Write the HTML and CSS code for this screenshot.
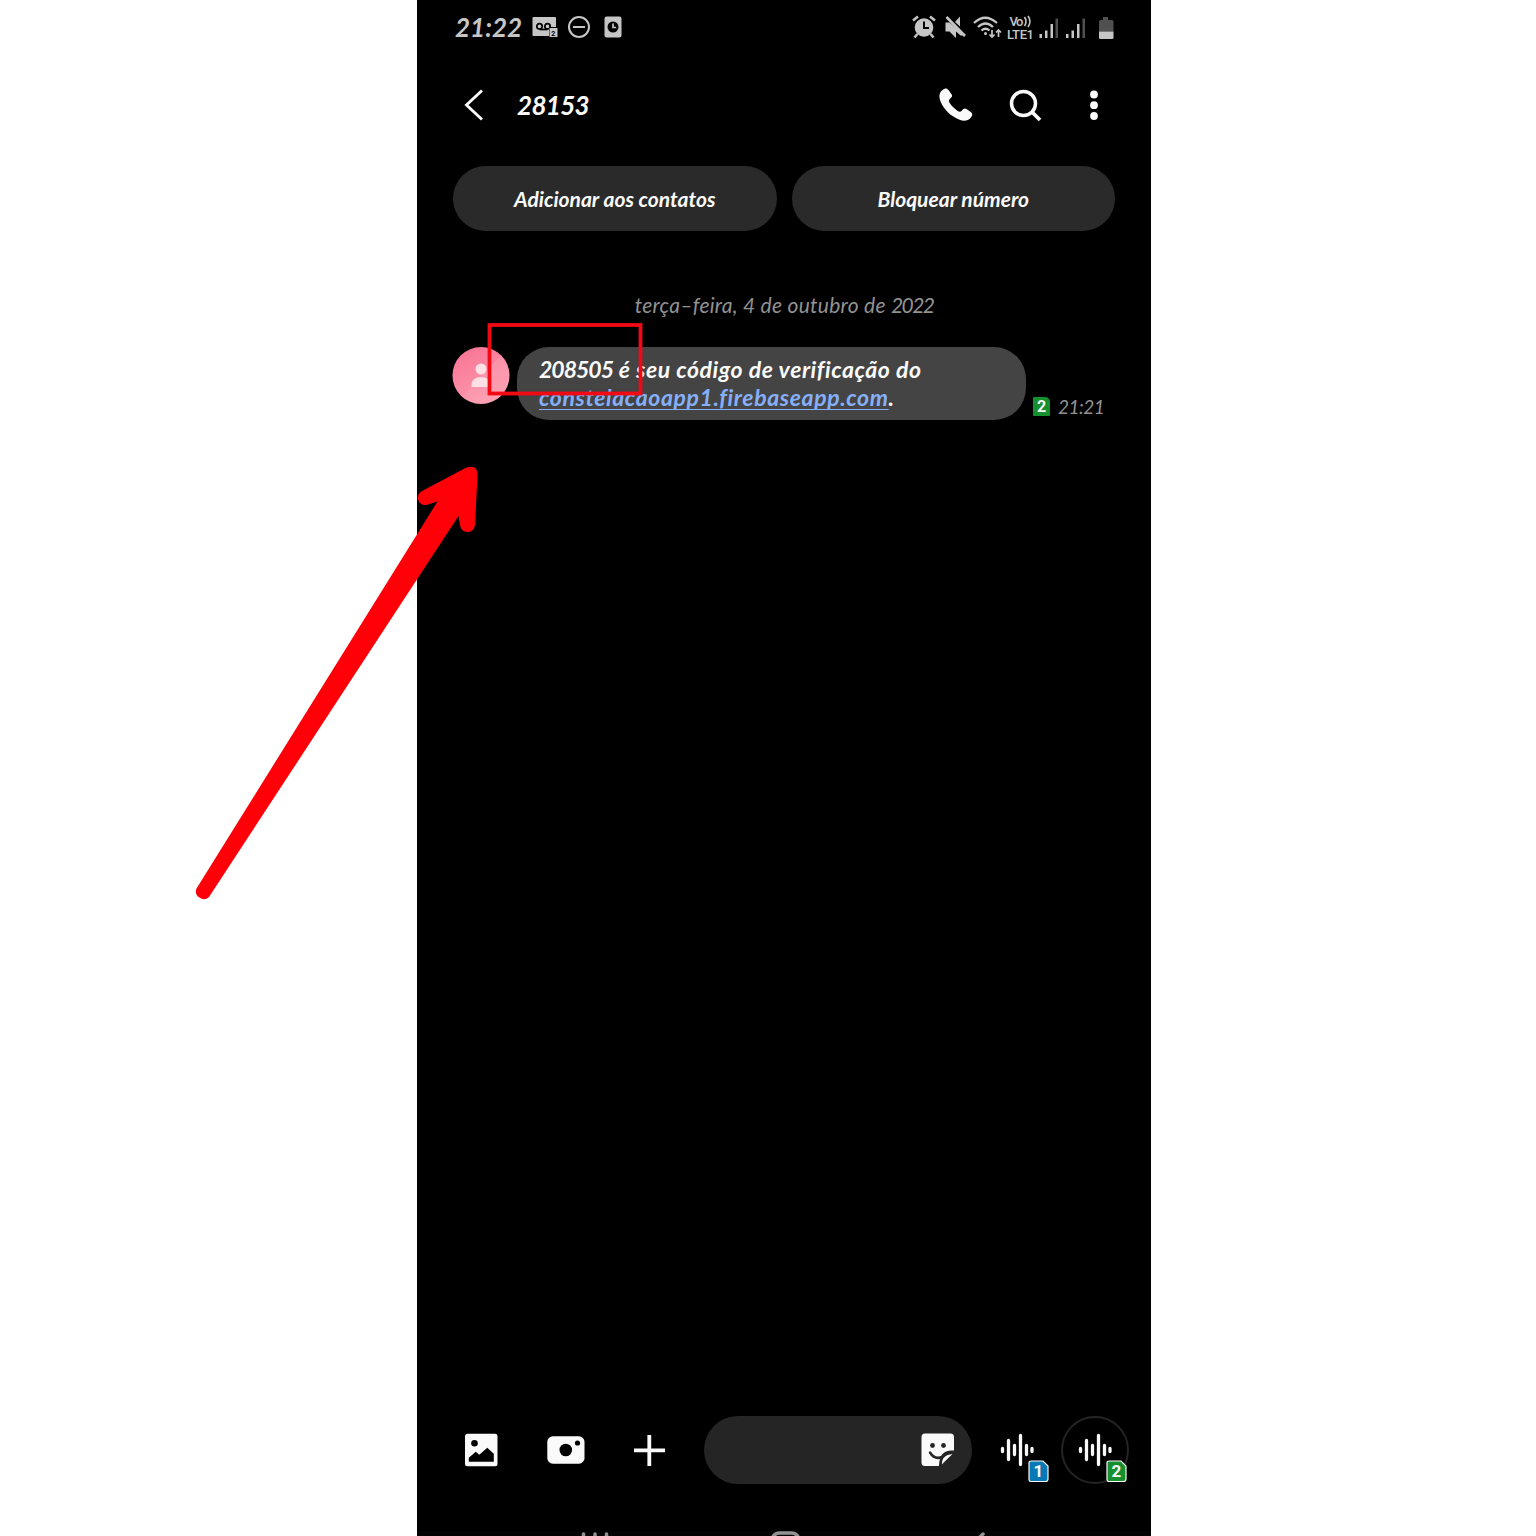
FILE: index.html
```html
<!DOCTYPE html>
<html lang="pt-BR">
<head>
<meta charset="utf-8">
<title>28153</title>
<link rel="stylesheet" href="styles.css">
</head>
<body>
<main class="phone">
  <div class="status">
    <span class="clock">21:22</span>
    <svg class="status-left" width="92" height="24" viewBox="0 0 92 24" fill="#c6c6c6">
      <path d="M1.500 2h21.500q1 0 1 1v9h-7v9h-15.500q-1 0-1-1v-17q0-1 1-1z"/>
      <g fill="none" stroke="#000" stroke-width="1.700"><circle cx="7.500" cy="11.300" r="2.700"/><circle cx="15.500" cy="11.300" r="2.700"/><path d="M7.500 14.500h8"/></g>
      <rect x="17.500" y="13" width="8" height="9"/><text class="tiny" x="19.300" y="20.500">2</text>
      <circle cx="47" cy="12" r="10" fill="none" stroke="#c6c6c6" stroke-width="2"/><path d="M41 11h12v2h-12z"/>
      <rect x="72.500" y="1.500" width="17" height="21" rx="2"/><circle cx="81" cy="12" r="5.500" fill="#000"/><path d="M81 8.500v4h3.200" fill="none" stroke="#c6c6c6" stroke-width="1.700"/>
    </svg>
    <svg class="status-right" width="204" height="26" viewBox="0 0 204 26" fill="#c6c6c6">
      <circle cx="12" cy="13.500" r="9.300"/>
      <path d="M1 6.500l5-4M18 2.500l5 4M5.500 20l-3 3.500M18.500 20l3 3.500" stroke="#c6c6c6" stroke-width="2.500"/>
      <path d="M12 7.500v6.500h5" fill="none" stroke="#000" stroke-width="2"/>
      <path d="M33.500 8.500h4l15 13h-4l-4.500-4v6.500l-6.500-6.500h-4zM43 8l5-5.500v10z"/><path d="M34.500 3l18.500 19" stroke="#c6c6c6" stroke-width="2.600"/>
      <g fill="none" stroke="#c6c6c6" stroke-width="2.300"><path d="M62 9q11-10.500 23 0M66 13q7.500-7 15 0M69.500 16.500q4-3.500 8 0"/><path d="M80 16v7M77.500 20.500l2.500 2.500 2.500-2.500M86.500 23v-7M84 18.500l2.500-2.500 2.500 2.500" stroke-width="1.700"/></g><circle cx="73.500" cy="19.500" r="1.500"/>
      <text class="net" x="97.500" y="12" textLength="14">Vo</text><path d="M112.500 3q3 4.500 0 9M116 2q4 5.500 0 11" fill="none" stroke="#c6c6c6" stroke-width="1.700"/>
      <text class="net" x="95" y="24.500" textLength="27">LTE1</text>
      <path d="M127.500 20h2.500v4h-2.500zM133 16.500h2.500v7.500h-2.500zM138.500 10h2.500v14h-2.500zM154 20h2.500v4h-2.500zM159.500 16.500h2.500v7.500h-2.500zM165 10h2.500v14h-2.500z"/>
      <path d="M143.500 4.500h2.500v19.500h-2.500zM170.500 4.500h2.500v19.500h-2.500zM191 3h5v3h4q1.500 0 1.500 1.500v10h-14.500v-10q0-1.500 1.500-1.500h2.500z" fill="#505050"/>
      <path d="M187 17.500h14.500v6q0 1.500-1.500 1.500h-11.500q-1.500 0-1.500-1.500z"/>
    </svg>
  </div>

  <header class="header">
    <svg width="22" height="34" viewBox="0 0 22 34" fill="none" stroke="#fafafa" stroke-width="2.900"><path d="M19 2.500l-15.500 14.500 15.500 14.500"/></svg>
    <h1 class="title">28153</h1>
    <svg width="34" height="34" viewBox="0 0 34 34" fill="#fafafa"><path d="M3.200 2.200C6-.2 8-.1 9.500 2l3 4.200c1.200 1.700.6 2.900-1.700 4.700-1.300 1.200-1.200 2.500.1 4.300 2.100 3 4.500 5.400 7.500 7.500 1.900 1.300 3 1.400 4.300.1 1.900-2.300 3.100-2.900 4.800-1.700l4.200 3c2.100 1.500 2.100 3.400-.2 6-2.700 3-7 3.500-11.500 1.400C11.500 28 5 21.500 1.500 13.500-.2 9-.1 5 3.200 2.200z"/></svg>
    <svg class="search" width="34" height="34" viewBox="0 0 34 34" fill="none" stroke="#fafafa" stroke-width="3.500"><circle cx="14.500" cy="15.500" r="12"/><path d="M23 24l8 8" stroke-width="3.700"/></svg>
    <svg class="more" width="8" height="34" viewBox="0 0 8 34" fill="#fafafa"><circle cx="4" cy="6.500" r="3.900"/><circle cx="4" cy="17.200" r="3.900"/><circle cx="4" cy="28" r="3.900"/></svg>
  </header>

  <div class="actions">
    <button class="action">Adicionar aos contatos</button>
    <button class="action">Bloquear número</button>
  </div>

  <section class="thread">
    <p class="date">terça–feira, 4 de outubro de <span class="year">2022</span></p>
    <div class="message">
      <svg class="avatar" width="58" height="58" viewBox="0 0 58 58">
        <defs><linearGradient id="rose" x2="0.500" y2="1"><stop stop-color="#f87194"/><stop offset="1" stop-color="#fd9aad"/></linearGradient></defs>
        <circle cx="29" cy="28.500" r="28.500" fill="url(#rose)"/>
        <path d="M29 29L49 8.500A28.500 28.500 0 0 1 57.500 29z" fill="#fff" opacity=".1"/><path d="M29 29h28.500A28.500 28.500 0 0 1 10 50z" fill="#fff" opacity=".07"/>
        <circle cx="29" cy="22" r="5.500" fill="#fde0e6"/><path d="M19.500 40v-2c0-5 4-8 9.500-8s9.500 3 9.500 8v2z" fill="#fde0e6"/>
      </svg>
      <div class="bubble">
        <div class="line"><span class="code">208505</span> é seu código de verificação do</div>
        <div class="line"><a class="link">constelacaoapp1.firebaseapp.com</a>.</div>
      </div>
      <div class="meta"><span class="sim">2</span><span class="time">21:21</span></div>
    </div>
  </section>

  <footer class="composer">
    <svg class="gallery" width="34" height="34" viewBox="0 0 34 34"><rect x="1" y=".7" width="32.500" height="32.500" rx="2.500" fill="#fafafa"/><circle cx="10.500" cy="10.300" r="3.300"/><path d="M4.800 28.700v-4l7-6 3.500 3 8-7 6.500 6v8z"/></svg>
    <svg class="camera" width="38" height="28" viewBox="0 0 38 28"><rect x=".3" y=".3" width="37.200" height="27.400" rx="5.500" fill="#fafafa"/><circle cx="18.800" cy="14" r="6.300"/><circle cx="30.500" cy="7" r="2.600"/></svg>
    <svg class="plus" width="32" height="32" viewBox="0 0 32 32" stroke="#fafafa" stroke-width="3.800"><path d="M0 16.300h31M15.300 1v31"/></svg>
    <div class="field">
      <svg width="34" height="34" viewBox="0 0 34 34"><path d="M4 .5h25.500q3.500 0 3.500 3.500v13.500q-15-1.500-15 15.500H4Q.5 33 .5 29.500V4Q.5.500 4 .5z" fill="#fafafa"/><circle cx="11.500" cy="12.500" r="2.400" fill="#252525"/><circle cx="22.500" cy="12.500" r="2.400" fill="#252525"/><path d="M9 19.500q4.500 7.500 12 4.500" fill="none" stroke="#252525" stroke-width="2.500" stroke-linecap="round"/><path d="M31.500 21Q22 30 21 31.500q-.5-9.500 10.500-10.500z" fill="#fafafa"/></svg>
    </div>
    <div class="voice">
      <svg width="34" height="34" viewBox="0 0 34 34" stroke="#fafafa" stroke-width="3.300" stroke-linecap="round"><path d="M2.500 15.500v3M8.500 7.500v19M14.500 12.500v9M20.500 2.500v29M26.500 12.500v9M32 15.500v3"/></svg>
      <svg class="badge" width="21" height="23" viewBox="0 0 21 23"><path d="M3 1h12l5 5v13q0 2.500-2.500 2.500H3Q1 21.500 1 19V3q0-2 2-2z" fill="#0879b5" stroke="#fafafa" stroke-width="1.200"/><text class="badge-text" x="10.500" y="17.200">1</text></svg>
    </div>
    <div class="voice ringed">
      <svg width="34" height="34" viewBox="0 0 34 34" stroke="#fafafa" stroke-width="3.300" stroke-linecap="round"><path d="M2.500 15.500v3M8.500 7.500v19M14.500 12.500v9M20.500 2.500v29M26.500 12.500v9M32 15.500v3"/></svg>
      <svg class="badge" width="21" height="23" viewBox="0 0 21 23"><path d="M3 1h12l5 5v13q0 2.500-2.500 2.500H3Q1 21.500 1 19V3q0-2 2-2z" fill="#16902e" stroke="#fafafa" stroke-width="1.200"/><text class="badge-text" x="10.500" y="17.200">2</text></svg>
    </div>
  </footer>
  <svg class="navbar" width="734" height="5" viewBox="0 0 734 5" fill="none" stroke="#929292" stroke-width="3.500" stroke-linecap="round"><path d="M166.500 3v8M178 3v8M189.500 3v8M355 9q1-7 8-7h11q7 0 8 7M566 3l-8 8"/></svg>
</main>

<svg class="markup" width="1536" height="1536" viewBox="0 0 1536 1536">
  <rect x="489.500" y="325" width="151" height="68.500" fill="none" stroke="#f10914" stroke-width="3.800"/>
  <path d="M465.500 468Q477.500 463.500 477.500 475L475 525Q474 532 467.500 532Q461 532 460 525L458.500 516L209 897A7.800 7.800 0 0 1 196.500 888.500L437.500 501.500L427 504.800Q420 506 418 499.500Q417 493 423 490.500Z" fill="#ff0009"/>
</svg>
</body>
</html>
```
FILE: styles.css
```css
* { box-sizing: border-box; }
body { margin: 0; background: #fff; }
svg { display: block; flex: none; }

.phone {
  width: 734px;
  height: 1536px;
  margin-left: 417px;
  background: #000;
  color: #fafafa;
  font-family: Lato, "Open Sans", sans-serif;
  font-style: italic;
  display: flex;
  flex-direction: column;
  overflow: hidden;
  white-space: nowrap;
}

.status { height: 54px; padding: 0 35px 0 38px; display: flex; align-items: center; color: #c6c6c6; }
.clock { width: 77px; font-size: 26px; font-weight: 700; }
.status-right { margin-left: auto; }
.tiny { font: 700 7px Roboto, sans-serif; fill: #000; }
.net { font: 500 13px Roboto, sans-serif; }

.header { height: 102px; padding: 0 53px 0 46px; display: flex; align-items: center; }
.title { margin: 0 auto 0 32px; font-size: 26px; font-weight: 700; letter-spacing: -0.7px; }
.search { margin-left: 36px; }
.more { margin-left: 47px; }

.actions { display: flex; gap: 15px; padding: 10px 36px 0; }
.action {
  flex: 1;
  height: 65px;
  border: 0;
  border-radius: 33px;
  background: #2a2a2a;
  color: #fafafa;
  font: italic 700 21px Lato, sans-serif;
}

.thread { flex: 1; padding-top: 61px; }
.date { margin: 0 0 30px; text-align: center; font-size: 21px; line-height: 25px; color: #929292; letter-spacing: 0.28px; }
.year { letter-spacing: -1.6px; }
.message { display: flex; padding-left: 35px; align-items: flex-start; }
.bubble { width: 509px; height: 73px; margin-left: 7px; padding: 8px 22px; border-radius: 32px; background: #444; font-size: 23px; font-weight: 700; letter-spacing: 0.56px; }
.code { letter-spacing: -1px; }
.line { line-height: 28px; }
.link { color: #86affa; letter-spacing: 0.62px; text-decoration: underline; text-decoration-thickness: 1px; text-underline-offset: 3px; text-decoration-skip-ink: none; }
.meta { height: 73px; margin-left: 7px; padding-top: 45px; display: flex; align-items: center; color: #929292; }
.sim { width: 17px; height: 19px; border-radius: 1px 5px 1px 1px; background: #16902e; color: #fafafa; font: 700 16px/20px Roboto, sans-serif; text-align: center; }
.time { margin-left: 8px; font-size: 19px; letter-spacing: -0.5px; }

.composer { height: 68px; margin-bottom: 47px; padding-left: 47px; display: flex; align-items: center; }
.camera { margin-left: 49px; }
.plus { margin-left: 49px; }
.field { width: 268px; height: 68px; margin-left: 38px; padding-right: 17px; border-radius: 34px; background: #252525; display: flex; align-items: center; justify-content: flex-end; }
.voice { position: relative; width: 68px; height: 68px; margin-left: 11px; display: flex; align-items: center; justify-content: center; }
.ringed { margin-left: 10px; border: 2px solid #242424; border-radius: 50%; }
.badge { position: absolute; left: 45px; top: 44px; }
.ringed .badge { left: 43px; top: 42px; }
.badge-text { font: 700 17px Roboto, sans-serif; fill: #fafafa; text-anchor: middle; }
.navbar { background: #040404; }

.markup { position: absolute; left: 0; top: 0; }
```
